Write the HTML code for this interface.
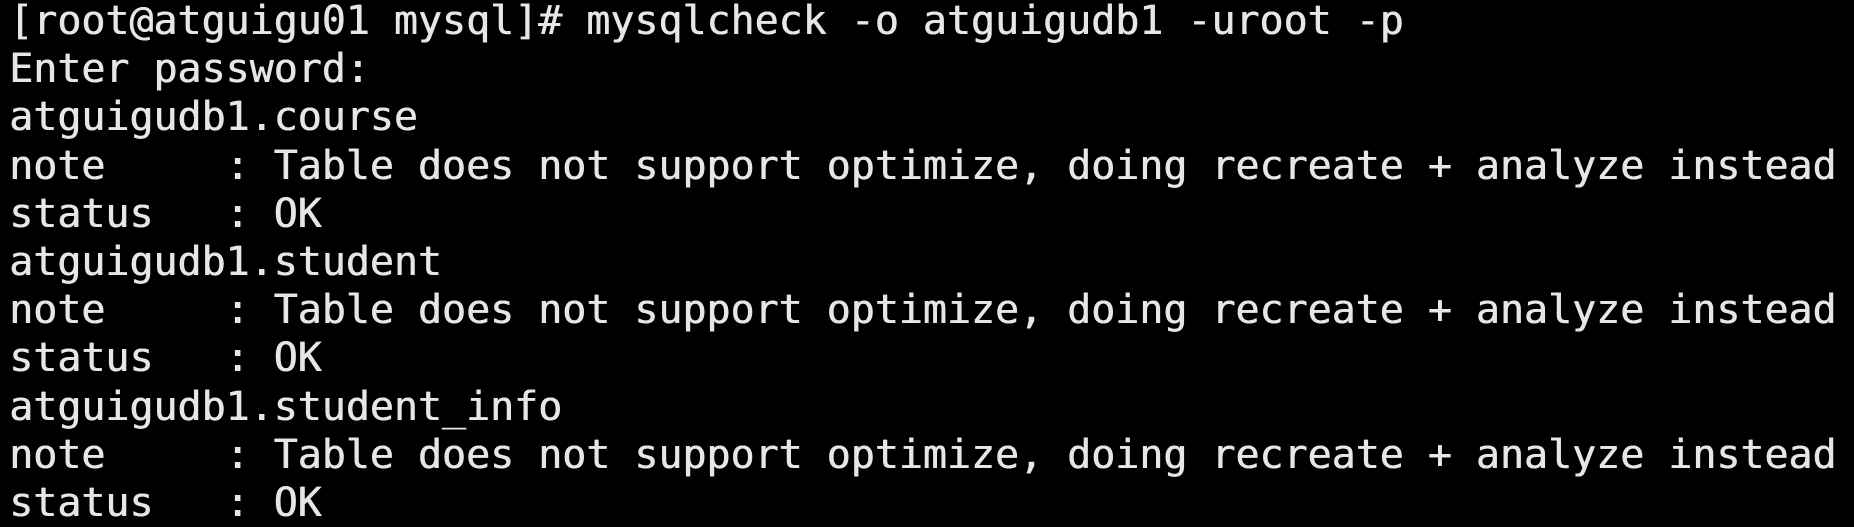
<!DOCTYPE html>
<html><head><style>
html,body{margin:0;padding:0;background:#000;width:1854px;height:522px;overflow:hidden}
pre{margin:0;position:absolute;left:9px;top:-3px;font-family:"DejaVu Sans Mono","Liberation Mono",monospace;font-size:39.95px;line-height:48.2px;color:#e6e6e6;white-space:pre;text-shadow:0.6px 0 0 #e6e6e6}
</style></head><body>
<pre>[root@atguigu01 mysql]# mysqlcheck -o atguigudb1 -uroot -p
Enter password:
atguigudb1.course
note     : Table does not support optimize, doing recreate + analyze instead
status   : OK
atguigudb1.student
note     : Table does not support optimize, doing recreate + analyze instead
status   : OK
atguigudb1.student_info
note     : Table does not support optimize, doing recreate + analyze instead
status   : OK</pre>
</body></html>
